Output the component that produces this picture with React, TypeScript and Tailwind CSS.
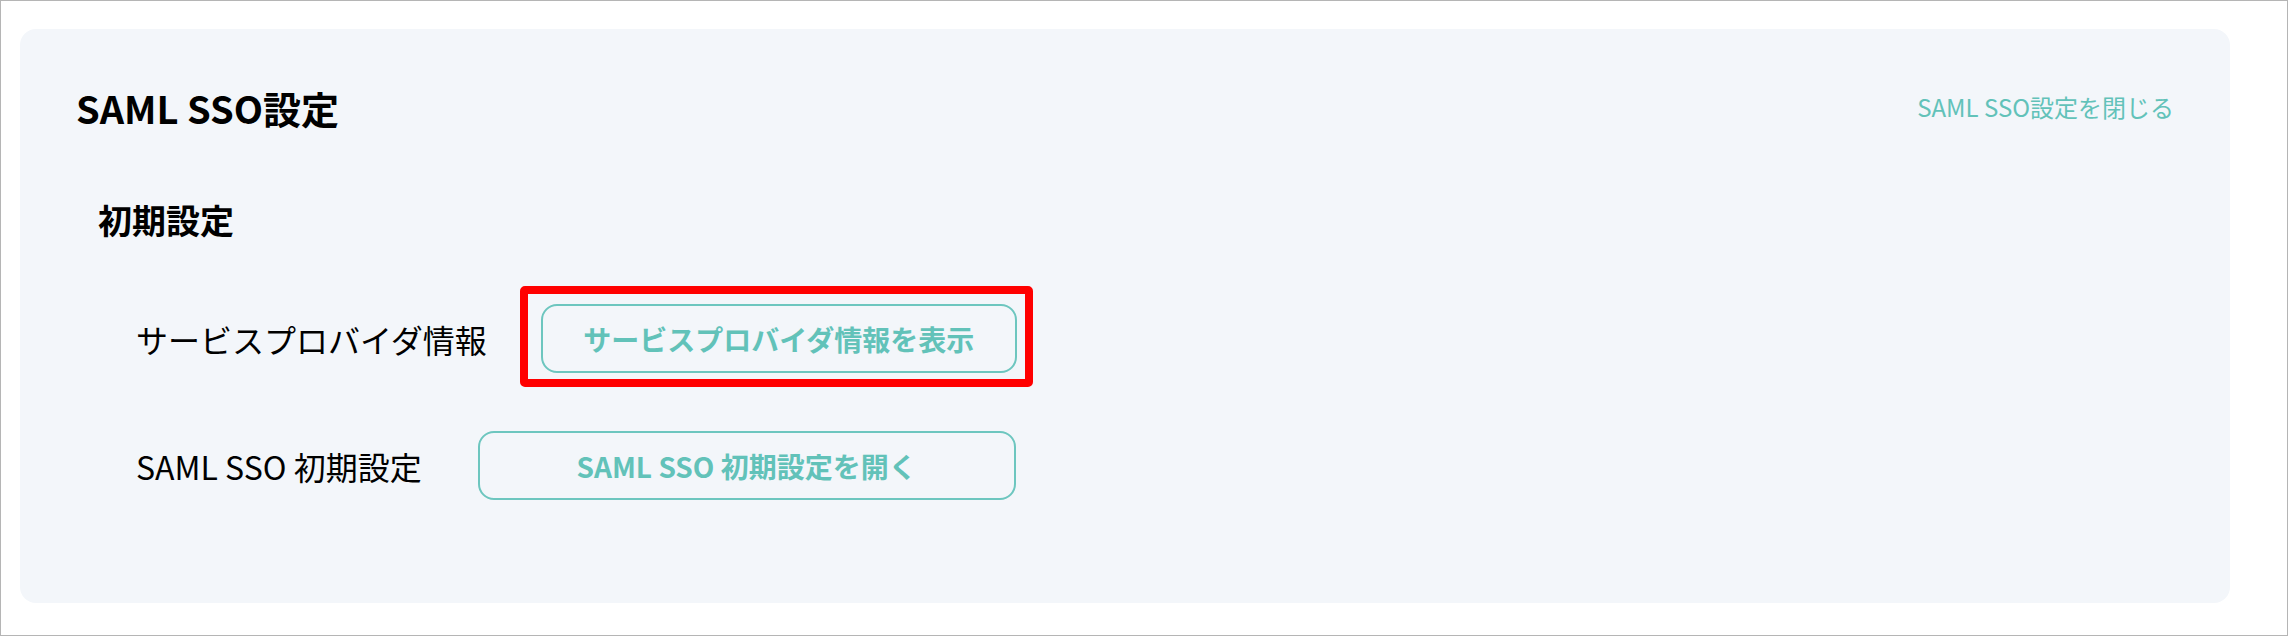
import React from "react";

const font = { fontFamily: '"Noto Sans CJK JP", "Noto Sans", sans-serif' };

function OutlineButton({
  label,
  className,
  highlight,
}: {
  label: string;
  className: string;
  highlight?: boolean;
}) {
  return (
    <div className={`relative shrink-0 ${className}`}>
      <button className="flex h-[69px] w-full items-center justify-center rounded-[16px] border-2 border-[#6dc6bf] text-[28px] font-bold text-[#62c2b9]">
        {label}
      </button>
      {highlight && (
        <div className="pointer-events-none absolute -top-[18px] -left-[21px] -right-[16px] -bottom-[14px] rounded-[5px] border-[8px] border-[#ff0000]" />
      )}
    </div>
  );
}

export default function App() {
  return (
    <div
      className="box-border h-[636px] w-[2288px] border border-[#b5b5b5] bg-white pt-[28px] pl-[19px]"
      style={font}
    >
      <div className="h-[574px] w-[2210px] rounded-[16px] bg-[#f3f6fa] px-[56px] pt-[50px]">
        <div className="flex h-[56px] items-center justify-between">
          <h1 className="text-[38px] font-bold text-black">SAML SSO設定</h1>
          <a className="text-[24px] text-[#62c2b9]">SAML SSO設定を閉じる</a>
        </div>

        <h2 className="mt-[61px] ml-[22px] text-[34px] leading-[48px] font-bold text-black">
          初期設定
        </h2>

        <div className="mt-[60px] ml-[60px] flex flex-col gap-[58px]">
          <div className="flex items-center gap-[54px]">
            <span className="text-[32px] text-black">サービスプロバイダ情報</span>
            <OutlineButton
              label="サービスプロバイダ情報を表示"
              className="w-[476px]"
              highlight
            />
          </div>
          <div className="flex items-center gap-[56px]">
            <span className="text-[32px] text-black">SAML SSO 初期設定</span>
            <OutlineButton label="SAML SSO 初期設定を開く" className="w-[538px]" />
          </div>
        </div>
      </div>
    </div>
  );
}
